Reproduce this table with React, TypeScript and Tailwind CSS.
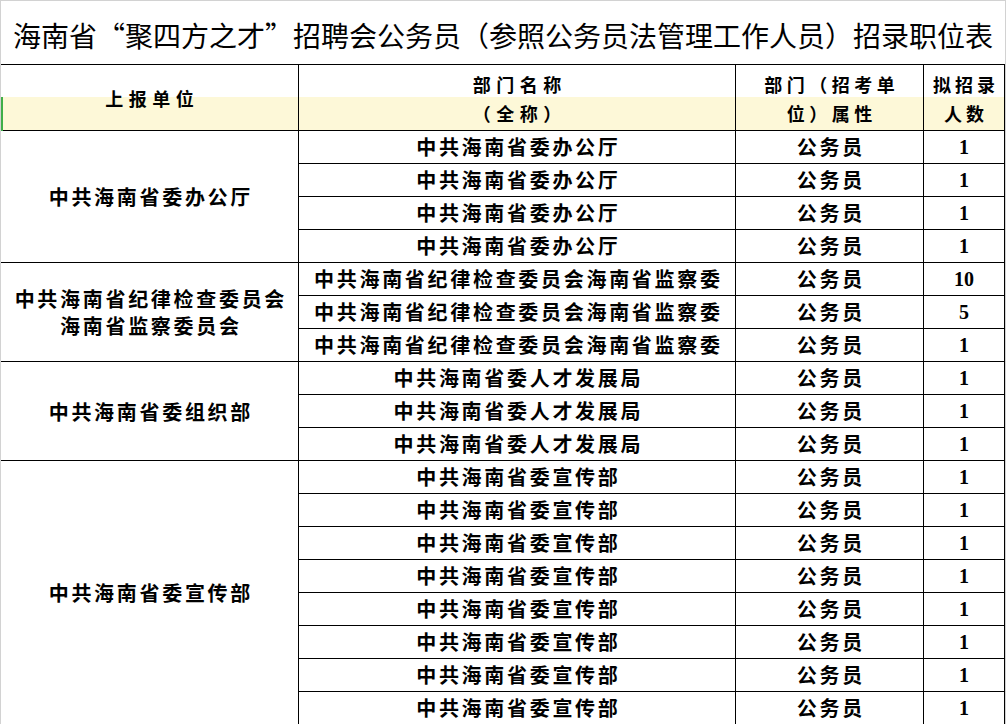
import React from "react";

type Row = { dept: string; attr: string; count: string };
type Group = { unit: string[]; rows: Row[]; span: string };

const mk = (dept: string, n: number, counts?: string[]): Row[] =>
  Array.from({ length: n }, (_, i) => ({ dept, attr: "公务员", count: counts ? counts[i] : "1" }));

const groups: Group[] = [
  { unit: ["中共海南省委办公厅"], rows: mk("中共海南省委办公厅", 4), span: "row-span-4" },
  {
    unit: ["中共海南省纪律检查委员会", "海南省监察委员会"],
    rows: mk("中共海南省纪律检查委员会海南省监察委", 3, ["10", "5", "1"]),
    span: "row-span-3",
  },
  { unit: ["中共海南省委组织部"], rows: mk("中共海南省委人才发展局", 3), span: "row-span-3" },
  { unit: ["中共海南省委宣传部"], rows: mk("中共海南省委宣传部", 8), span: "row-span-8" },
];

const headBg = "bg-[linear-gradient(to_bottom,#ffffff_32px,#fdf8d8_32px)]";

export default function App() {
  return (
    <div className="relative w-[1006px] h-[724px] overflow-hidden bg-white border-l border-t border-r border-[#d2d2d2] font-['Noto_Sans_CJK_SC',sans-serif] text-black">
      <div className="h-[63px] flex items-center justify-center pt-[5px] text-[28px] leading-none whitespace-nowrap">
        海南省“聚四方之才”招聘会公务员（参照公务员法管理工作人员）招录职位表
      </div>
      <div className="grid grid-cols-[297px_436px_187px_80px] grid-rows-[65px_repeat(18,32px)] gap-px bg-black pt-px pr-px">
        <div className={`${headBg} flex items-center justify-center text-[18px] font-bold tracking-[5.5px] pl-[5.5px] pt-[2px]`}>
          上报单位
        </div>
        <div className={`${headBg} flex flex-col items-center justify-center text-[18px] font-bold leading-[29px] tracking-[5.5px] pl-[5.5px] pt-[2px]`}>
          <span>部门名称</span>
          <span>（全称）</span>
        </div>
        <div className={`${headBg} flex flex-col items-center justify-center text-[18px] font-bold leading-[29px] tracking-[4.5px] pl-[4.5px] pt-[2px]`}>
          <span>部门（招考单</span>
          <span>位）属性</span>
        </div>
        <div className={`${headBg} flex flex-col items-center justify-center text-[18px] font-bold leading-[29px] tracking-[4px] pl-[4px] pt-[2px]`}>
          <span>拟招录</span>
          <span>人数</span>
        </div>
        {groups.map((g, gi) => (
          <React.Fragment key={gi}>
            <div className={`${g.span} col-start-1 bg-white flex flex-col items-center justify-center text-[20px] font-bold leading-[27px] tracking-[2.7px] pl-[2.7px]`}>
              {g.unit.map((u) => (
                <span key={u}>{u}</span>
              ))}
            </div>
            {g.rows.map((r, ri) => (
              <React.Fragment key={ri}>
                <div className="col-start-2 bg-white flex items-center justify-center text-[20px] font-bold tracking-[2.7px] pl-[2.7px] whitespace-nowrap">
                  {r.dept}
                </div>
                <div className="bg-white flex items-center justify-center text-[20px] font-bold tracking-[2.7px] pl-[2.7px]">
                  {r.attr}
                </div>
                <div className="bg-white flex items-center justify-center text-[20px] font-bold font-['Liberation_Serif',serif]">
                  {r.count}
                </div>
              </React.Fragment>
            ))}
          </React.Fragment>
        ))}
      </div>
      <div className="absolute left-[-1px] top-[96px] w-[3px] h-[34px] bg-[#3fae49]" />
    </div>
  );
}
